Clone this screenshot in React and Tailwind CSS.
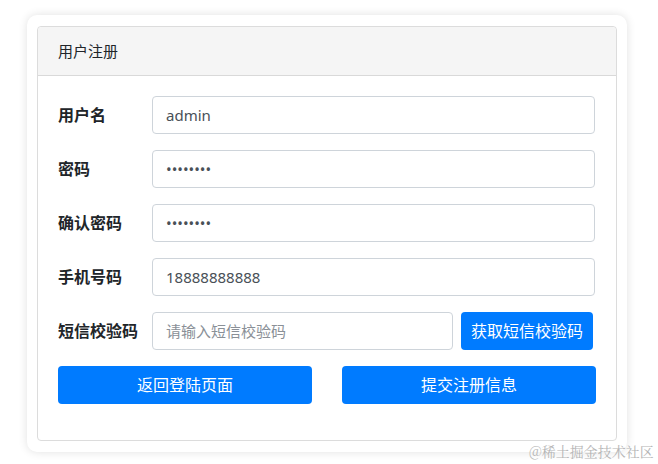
import React from "react";

const font = { fontFamily: '"Noto Sans", "Noto Sans CJK SC", sans-serif' };

function Row({ label, children }) {
  return (
    <div className="flex items-center mb-4">
      <div className="w-[94px] shrink-0 text-[16px] font-bold text-[#212529]">{label}</div>
      <div className="flex-1 flex gap-2 pr-px">{children}</div>
    </div>
  );
}

function Input({ className = "flex-1", ...props }) {
  return (
    <input
      readOnly
      {...props}
      className={`${className} min-w-0 h-[38px] px-[13px] border border-[#ced4da] rounded-[4px] bg-white text-[15px] text-[#495057] placeholder:text-[#8a9097] outline-none`}
    />
  );
}

export default function App() {
  return (
    <div className="relative w-[658px] h-[464px] bg-white pt-[15px] pl-[27px]" style={font}>
      <div className="w-[600px] h-[437px] bg-white rounded-[10px] shadow-[0_0_10px_rgba(0,0,0,0.12)] pt-[11px] px-[10px]">
        <div className="h-[415px] border border-[#dcdcdc] rounded-[4px] flex flex-col">
          <div className="h-[49px] bg-[#f5f5f5] border-b border-[#d9d9d9] flex items-center pl-[20px] text-[15px] text-[#212529] rounded-t-[4px]">
            用户注册
          </div>
          <div className="pt-[20px] px-[20px]">
            <Row label="用户名"><Input value="admin" /></Row>
            <Row label="密码"><Input type="password" value="12345678" /></Row>
            <Row label="确认密码"><Input type="password" value="12345678" /></Row>
            <Row label="手机号码"><Input value="18888888888" /></Row>
            <Row label="短信校验码">
              <Input className="w-[301px]" placeholder="请输入短信校验码" value="" />
              <button className="w-[132px] h-[38px] bg-[#007bff] text-white text-[16px] rounded-[4px]">获取短信校验码</button>
            </Row>
            <div className="flex gap-[30px]">
              <button className="flex-1 h-[38px] bg-[#007bff] text-white text-[16px] rounded-[4px]">返回登陆页面</button>
              <button className="flex-1 h-[38px] bg-[#007bff] text-white text-[16px] rounded-[4px]">提交注册信息</button>
            </div>
          </div>
        </div>
      </div>
      <div className="absolute left-[529px] top-[442px] whitespace-nowrap text-[14px] leading-[18px] text-[#b5b5b5]" style={{ fontFamily: '"Noto Serif CJK SC", "Noto Sans CJK SC", serif' }}>
        @稀土掘金技术社区
      </div>
    </div>
  );
}
